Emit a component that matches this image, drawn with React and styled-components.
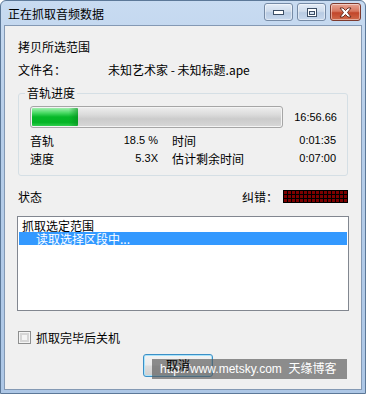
import React from 'react';
import styled, { createGlobalStyle } from 'styled-components';

const GlobalStyle = createGlobalStyle`
  html, body {
    margin: 0;
    padding: 0;
    background: #ffffff;
  }
  body {
    font-family: "Liberation Sans", "Noto Sans CJK SC", sans-serif;
    font-size: 12px;
    color: #000;
  }
`;

const progress = 18.5;

const Window = styled.div`
  width: 366px;
  height: 394px;
  box-sizing: border-box;
  display: flex;
  flex-direction: column;
  background: linear-gradient(to bottom, #c8dbf1 0%, #b7cee9 30%, #adc7e6 100%);
  border: 1px solid #5c7898;
  border-radius: 6px 6px 0 0;
  padding: 0 3px 3px 3px;
`;

const TitleBar = styled.div`
  height: 24px;
  display: flex;
  align-items: flex-start;
  justify-content: space-between;
  padding-left: 4px;
`;

const Title = styled.div`
  font-family: "Noto Sans CJK SC", sans-serif;
  font-size: 12px;
  line-height: 26px;
  color: #000;
`;

const Caption = styled.div`
  display: flex;
  gap: 4px;
  margin-top: 2px;
  margin-right: 1px;
`;

const CapButton = styled.div`
  width: ${(p) => (p.$close ? 31 : 29)}px;
  height: 18px;
  box-sizing: border-box;
  border: 1px solid ${(p) => (p.$close ? '#7d3a2e' : '#768ba6')};
  border-radius: 3px;
  display: flex;
  align-items: center;
  justify-content: center;
  box-shadow: inset 0 0 0 1px rgba(255, 255, 255, 0.45);
  background: ${(p) =>
    p.$close
      ? 'linear-gradient(to bottom, #e8a493 0%, #d7775f 45%, #c2462a 55%, #d06a4a 100%)'
      : 'linear-gradient(to bottom, #e3ecf7 0%, #cfdcec 45%, #b8cbe3 55%, #c8d9ee 100%)'};
`;

const Client = styled.div`
  position: relative;
  flex: 1;
  background: #f0f0f0;
  border: 1px solid #8499b4;
  padding: 0 13px;
  display: flex;
  flex-direction: column;
`;

const Line = styled.div`
  display: flex;
  align-items: center;
  height: 16px;
  margin-top: ${(p) => p.$top || 0}px;
  font-family: "Noto Sans CJK SC", sans-serif;
`;

const FileLabel = styled.span`
  width: 90px;
`;

const Group = styled.fieldset`
  margin: 8px 0 0;
  padding: 5px 10px 8px 11px;
  border: 1px solid #d5dfe5;
  border-radius: 3px;
  min-width: 0;
`;

const Legend = styled.legend`
  padding: 0 2px;
  margin-left: -5px;
  line-height: 16px;
  font-family: "Noto Sans CJK SC", sans-serif;
`;

const ProgressRow = styled.div`
  display: flex;
  align-items: center;
  height: 22px;
`;

const Bar = styled.div`
  width: 253px;
  height: 22px;
  box-sizing: border-box;
  border: 1px solid #a6a6a6;
  border-radius: 3px;
  padding: 1px;
  background: linear-gradient(to bottom, #eeeeee 0%, #dadada 40%, #cbcbcb 60%, #d8d8d8 100%);
  box-shadow: inset 0 0 0 1px #f4f4f4;
`;

const Fill = styled.div`
  height: 100%;
  border-radius: 1px;
  background:
    linear-gradient(to right, rgba(6, 150, 30, 0) 80%, rgba(6, 140, 30, 0.6) 100%),
    linear-gradient(to bottom, #a2eeaf 0%, #4fdc69 25%, #06b828 50%, #05b526 80%, #2fd04d 100%);
`;

const Num = styled.span`
  font-family: "Liberation Sans", sans-serif;
  font-size: 11px;
`;

const BarTime = styled(Num)`
  flex: 1;
  text-align: right;
`;

const Stats = styled.div`
  display: grid;
  grid-template-columns: 128px 164px;
  column-gap: 14px;
  margin-top: 3px;
`;

const Stat = styled.div`
  display: flex;
  justify-content: space-between;
  align-items: center;
  height: 18px;
  font-family: "Noto Sans CJK SC", sans-serif;
`;

const StatusRow = styled.div`
  display: flex;
  align-items: center;
  justify-content: space-between;
  height: 13px;
  margin-top: 14px;
  font-family: "Noto Sans CJK SC", sans-serif;
`;

const ErrorBox = styled.div`
  display: flex;
  align-items: center;
  gap: 5px;
`;

const Led = styled.div`
  display: grid;
  grid-template-columns: repeat(16, 3px);
  grid-auto-rows: 3px;
  gap: 1px;
  padding: 1px;
  background: #000;
`;

const LedCell = styled.span`
  background: #7d0000;
`;

const ListBox = styled.div`
  margin: 13px -1px 0;
  height: 95px;
  box-sizing: border-box;
  border: 1px solid #828790;
  background: #fff;
  padding: 2px 1px;
  font-family: "Noto Sans CJK SC", sans-serif;
`;

const ListItem = styled.div`
  height: 13px;
  line-height: 13px;
  padding-left: ${(p) => (p.$indent ? 17 : 3)}px;
  background: ${(p) => (p.$selected ? '#3399ff' : 'transparent')};
  color: ${(p) => (p.$selected ? '#fff' : '#000')};
  white-space: nowrap;
`;

const CheckRow = styled.label`
  display: flex;
  align-items: center;
  gap: 5px;
  height: 13px;
  margin-top: 20px;
  font-family: "Noto Sans CJK SC", sans-serif;
`;

const CheckBox = styled.span`
  width: 13px;
  height: 13px;
  box-sizing: border-box;
  border: 1px solid #8e8f8f;
  background: #f4f4f4;
  box-shadow: inset 0 0 0 1px #f4f4f4, inset 0 0 0 3px #d6d6d6;
`;

const ButtonRow = styled.div`
  display: flex;
  margin-top: 10px;
  padding-left: 125px;
`;

const Button = styled.button`
  width: 70px;
  height: 23px;
  box-sizing: border-box;
  border: 1px solid #3c8fc6;
  border-radius: 3px;
  box-shadow: inset 0 0 0 1px #a9e4fb;
  background: linear-gradient(to bottom, #f3f3f3 0%, #ebebeb 48%, #dddddd 52%, #d0d0d0 100%);
  font-family: "Noto Sans CJK SC", sans-serif;
  font-size: 12px;
  color: #000;
  padding: 0 0 3px;
`;

/* the button caption shows through the watermark in the screenshot */
const ButtonLabel = styled.span`
  position: relative;
  z-index: 2;
`;

const Watermark = styled.div`
  position: absolute;
  z-index: 1;
  left: 147px;
  top: 333px;
  width: 195px;
  height: 20px;
  background: rgba(88, 88, 88, 0.66);
  color: #fff;
  font-family: "Liberation Sans", "Noto Sans CJK SC", sans-serif;
  font-size: 12px;
  line-height: 20px;
  padding-left: 8px;
  box-sizing: border-box;
  white-space: pre;
`;

const MinIcon = () => (
  <svg width="11" height="6" viewBox="0 0 11 6">
    <rect x="0.5" y="1.5" width="10" height="4" fill="#fff" stroke="#3d4f66" />
  </svg>
);

const MaxIcon = () => (
  <svg width="10" height="9" viewBox="0 0 10 9">
    <rect x="0.5" y="0.5" width="9" height="8" fill="#fff" stroke="#3d4f66" />
    <rect x="2.5" y="3.5" width="5" height="3" fill="#d6e2f0" stroke="#3d4f66" />
  </svg>
);

const CloseIcon = () => (
  <svg width="13" height="11" viewBox="0 0 13 11">
    <path
      d="M1 1 L4 1 L6.5 3.5 L9 1 L12 1 L8.5 5.5 L12 10 L9 10 L6.5 7.5 L4 10 L1 10 L4.5 5.5 Z"
      fill="#fff"
      stroke="#5a2418"
      strokeWidth="0.9"
      strokeLinejoin="round"
    />
  </svg>
);

const App = () => {
  const cells = Array.from({ length: 48 });

  return (
    <>
      <GlobalStyle />
      <Window>
        <TitleBar>
          <Title>正在抓取音频数据</Title>
          <Caption>
            <CapButton><MinIcon /></CapButton>
            <CapButton><MaxIcon /></CapButton>
            <CapButton $close><CloseIcon /></CapButton>
          </Caption>
        </TitleBar>

        <Client>
          <Line $top={12}>拷贝所选范围</Line>
          <Line $top={7}>
            <FileLabel>文件名：</FileLabel>
            <span>未知艺术家 - 未知标题.ape</span>
          </Line>

          <Group>
            <Legend>音轨进度</Legend>
            <ProgressRow>
              <Bar>
                <Fill style={{ width: `${progress}%` }} />
              </Bar>
              <BarTime>16:56.66</BarTime>
            </ProgressRow>
            <Stats>
              <Stat><span>音轨</span><Num>18.5 %</Num></Stat>
              <Stat><span>时间</span><Num>0:01:35</Num></Stat>
              <Stat><span>速度</span><Num>5.3X</Num></Stat>
              <Stat><span>估计剩余时间</span><Num>0:07:00</Num></Stat>
            </Stats>
          </Group>

          <StatusRow>
            <span>状态</span>
            <ErrorBox>
              <span>纠错：</span>
              <Led>
                {cells.map((_, i) => (
                  <LedCell key={i} />
                ))}
              </Led>
            </ErrorBox>
          </StatusRow>

          <ListBox>
            <ListItem>抓取选定范围</ListItem>
            <ListItem $selected $indent>读取选择区段中...</ListItem>
          </ListBox>

          <CheckRow>
            <CheckBox />
            <span>抓取完毕后关机</span>
          </CheckRow>

          <ButtonRow>
            <Button><ButtonLabel>取消</ButtonLabel></Button>
          </ButtonRow>

          <Watermark>{'http://www.metsky.com  天缘博客'}</Watermark>
        </Client>
      </Window>
    </>
  );
};

export default App;
